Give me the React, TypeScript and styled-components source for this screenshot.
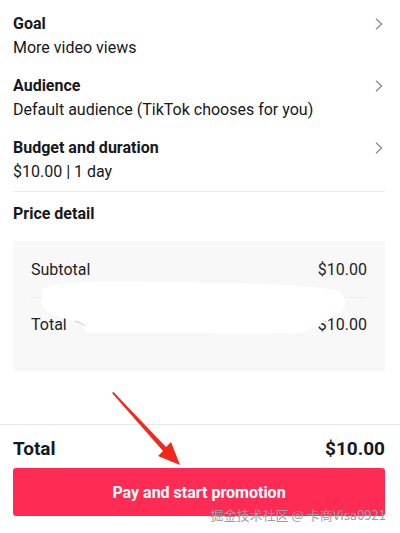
import React from 'react';
import styled, { createGlobalStyle } from 'styled-components';

const GlobalStyle = createGlobalStyle`
    html, body {
        margin: 0;
        padding: 0;
        background: #ffffff;
        overflow: hidden;
    }
    body {
        font-family: Roboto, "Noto Sans", "Noto Sans CJK SC", sans-serif;
        color: #161823;
    }
`

const Page = styled.div`
    position: relative;
    width: 400px;
    display: flex;
    flex-direction: column;
`
const Settings = styled.div`
    display: flex;
    flex-direction: column;
    gap: 15px;
    padding: 12px 17px 0 13px;
`
const SettingRow = styled.div`
    display: flex;
    justify-content: space-between;
    align-items: flex-start;
`
const SettingText = styled.div`
    display: flex;
    flex-direction: column;
`
const SettingTitle = styled.div`
    font-size: 16px;
    font-weight: 700;
    line-height: 24px;
`
const SettingValue = styled.div`
    font-size: 16px;
    line-height: 23px;
`
const Chevron = styled.svg`
    width: 8px;
    height: 12px;
    margin-top: 6px;
`
const Divider = styled.div`
    height: 1px;
    background: #ececed;
`
const SectionDivider = styled(Divider)`
    margin: 8px 15px 0 13px;
`
const PriceSection = styled.div`
    padding: 10px 15px 0 13px;
`
const SectionTitle = styled.div`
    font-size: 16px;
    font-weight: 700;
    line-height: 24px;
    margin-bottom: 15px;
`
const PriceBox = styled.div`
    position: relative;
    background: #f8f8f8;
    padding: 17px 18px 34px;
    display: flex;
    flex-direction: column;
    gap: 15px;
`
const PriceRow = styled.div`
    display: flex;
    justify-content: space-between;
    font-size: 16px;
    line-height: 24px;
    color: #222;
`
const Blob = styled.svg`
    position: absolute;
    left: 0;
    top: 0;
    width: 372px;
    height: 130px;
`
const Footer = styled.div`
    margin-top: 53px;
    border-top: 1px solid #e6e6e6;
    padding: 11px 15px 0 13px;
    display: flex;
    flex-direction: column;
    gap: 6px;
`
const TotalRow = styled.div`
    display: flex;
    justify-content: space-between;
    font-size: 19px;
    font-weight: 700;
    line-height: 26px;
`
const PayButton = styled.button`
    height: 48px;
    border: none;
    border-radius: 3px;
    background: #fe2c55;
    color: #ffffff;
    font-family: inherit;
    font-size: 16px;
    font-weight: 700;
    cursor: pointer;
`
const Terms = styled.div`
    padding: 9px 0 0 21px;
    font-size: 15px;
    line-height: 20px;
    color: #161823;
    white-space: nowrap;
    b { font-weight: 700; }
`
const Arrow = styled.svg`
    position: absolute;
    left: 100px;
    top: 387px;
    width: 90px;
    height: 85px;
`
const Watermark = styled.div`
    position: absolute;
    right: 14px;
    top: 505px;
    font-size: 13px;
    color: #9c9ca0;
    font-family: "Noto Sans CJK SC", Roboto, sans-serif;
`

const settings = [
    { title: 'Goal', value: 'More video views' },
    { title: 'Audience', value: 'Default audience (TikTok chooses for you)' },
    { title: 'Budget and duration', value: '$10.00 | 1 day' },
]

export default function App() {
    return (
        <Page>
            <GlobalStyle />
            <Settings>
                {settings.map((s) => (
                    <SettingRow key={s.title}>
                        <SettingText>
                            <SettingTitle>{s.title}</SettingTitle>
                            <SettingValue>{s.value}</SettingValue>
                        </SettingText>
                        <Chevron viewBox="0 0 8 12">
                            <path d="M1 0.8 L6.6 6 L1 11.2" fill="none" stroke="#8a8b91" strokeWidth="1.3" />
                        </Chevron>
                    </SettingRow>
                ))}
            </Settings>
            <SectionDivider />

            <PriceSection>
                <SectionTitle>Price detail</SectionTitle>
                <PriceBox>
                    <PriceRow>
                        <span>Subtotal</span>
                        <span>$10.00</span>
                    </PriceRow>
                    <Divider />
                    <PriceRow>
                        <span>Total</span>
                        <span>$10.00</span>
                    </PriceRow>
                    <Blob viewBox="0 0 372 130">
                        <path
                            d="M29 50 C30 42 60 40 140 41 C220 42 300 43 325 50 C335 56 334 66 326 72 C316 80 300 86 290 92 C240 93 150 92 74 92 C70 86 68 82 62 80 C45 76 30 72 29 62 Z"
                            fill="#ffffff"
                        />
                        <path d="M62 80 C66 81 70 83 72 85" fill="none" stroke="#c9c9cc" strokeWidth="1" />
                    </Blob>
                </PriceBox>
            </PriceSection>

            <Footer>
                <TotalRow>
                    <span>Total</span>
                    <span>$10.00</span>
                </TotalRow>
                <PayButton>Pay and start promotion</PayButton>
                <Terms>Promotion is ... you agree to the <b>TikTok</b> Terms</Terms>
            </Footer>

            <Arrow viewBox="0 0 90 85">
                <path d="M12 6 L13.5 5 L66 60 L71 55 L80 78 L58 69 L63 64 Z" fill="#f5261b" />
            </Arrow>
            <Watermark>掘金技术社区 @ 卡商Visa0921</Watermark>
        </Page>
    );
}
